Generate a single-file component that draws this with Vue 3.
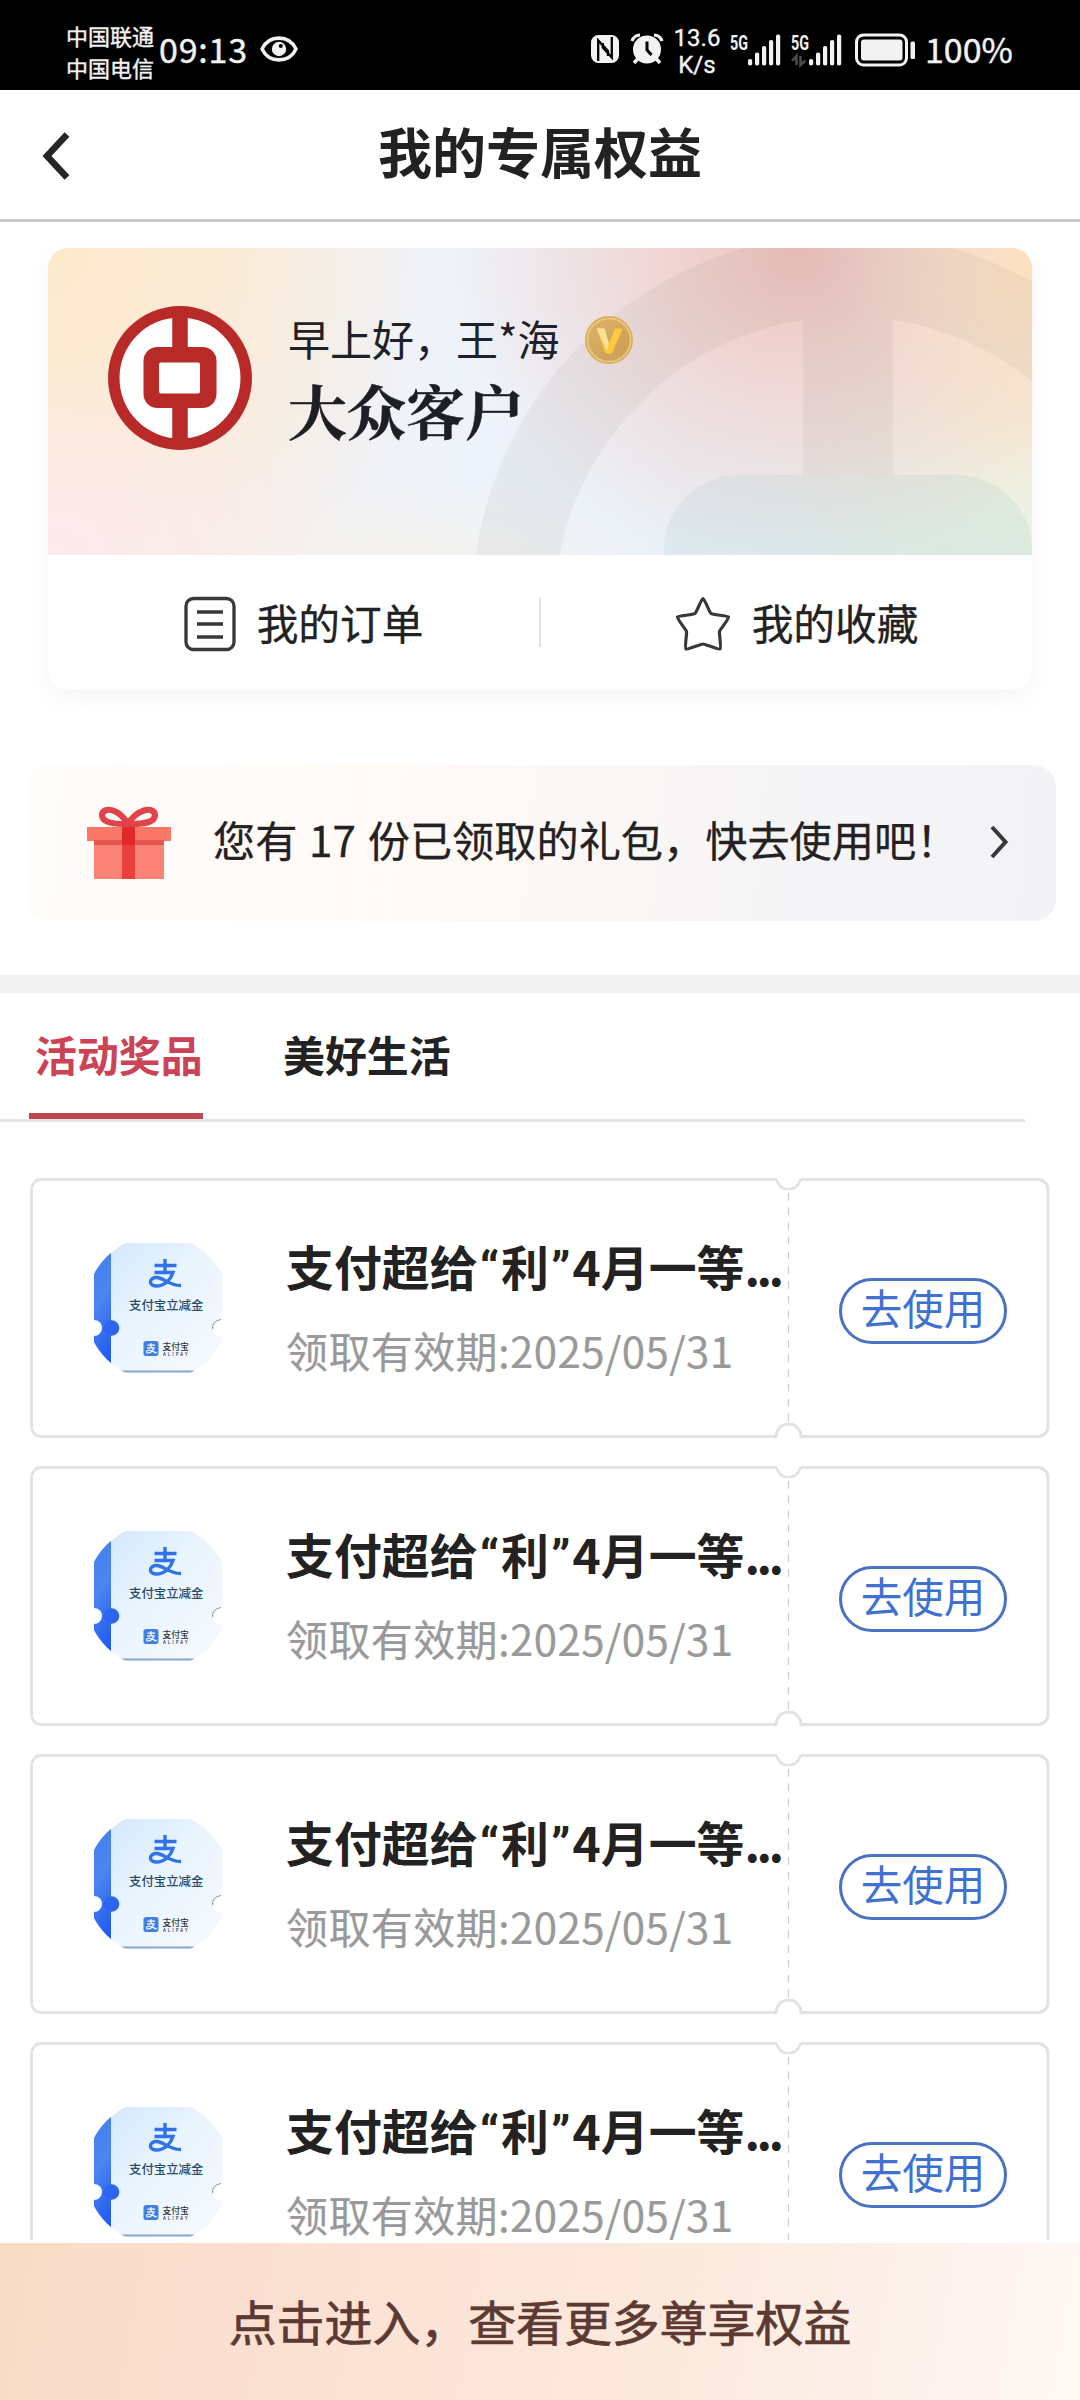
<script setup>
const coupons = [1, 2, 3, 4].map((id) => ({
  id,
  date: '领取有效期:2025/05/31',
}))
const sims = [{ id: 1, data: false }, { id: 2, data: true }]
const bars = [0, 1, 2, 3, 4]
const barTops = [59, 52.5, 46, 40, 34.5]
</script>

<template>
  <div class="screen">
    <div class="status">
      <div class="carriers"><span>中国联通</span><span>中国电信</span></div>
      <span class="time">09:13</span>
      <svg class="eye" width="40" height="28" viewBox="0 0 40 28">
        <path d="M3 14 C10 -0.500 30 -0.500 37 14 C30 28.500 10 28.500 3 14Z" fill="none" stroke="#f2f2f2" stroke-width="3.600" stroke-linejoin="round" />
        <circle cx="20" cy="14" r="7.200" fill="#f2f2f2" />
        <circle cx="21.800" cy="11" r="2" fill="#000" />
      </svg>
      <div class="spacer"></div>
      <svg class="nfc" width="30" height="30" viewBox="0 0 30 30">
        <rect x="1" y="1" width="28" height="28" rx="7.500" fill="#f2f2f2" />
        <path d="M8.200 27 V6.500 L18 17 V22" fill="none" stroke="#000" stroke-width="2.300" />
        <path d="M21.800 3 V23.500 L12.800 13.500 V9" fill="none" stroke="#000" stroke-width="2.300" />
      </svg>
      <svg class="alarm" width="34" height="32" viewBox="0 0 34 32">
        <path d="M8 25.500 L4 30 M26 25.500 L30 30" stroke="#f2f2f2" stroke-width="3.500" />
        <circle cx="17" cy="16.500" r="14" fill="#f2f2f2" />
        <path d="M2 8 A9 9 0 0 1 10 2 M32 8 A9 9 0 0 0 24 2" fill="none" stroke="#f2f2f2" stroke-width="3.200" />
        <path d="M17 8.500 V17 L21.500 22" fill="none" stroke="#000" stroke-width="3" />
      </svg>
      <div class="speed"><span>13.6</span><span>K/s</span></div>
      <svg v-for="s in sims" :key="s.id" class="signal" width="52" height="36" viewBox="0 32 52 36">
        <text class="g" x="0" y="49.500" textLength="18" lengthAdjust="spacingAndGlyphs">5G</text>
        <rect v-for="b in bars" :key="b" :x="18 + b * 7" :y="barTops[b]" width="4.200" :height="65.500 - barTops[b]" rx="1.800" fill="#f2f2f2" />
        <path v-if="s.data" d="M5.500 65 V56 L1 61 M9.500 56 V65 L14.500 60.500" fill="none" stroke="#4c4c4c" stroke-width="2.600" />
      </svg>
      <svg class="battery" width="61" height="34" viewBox="0 0 61 34">
        <rect x="1.500" y="2" width="50" height="30" rx="7" fill="none" stroke="#f2f2f2" stroke-width="3" />
        <rect x="6" y="6.500" width="41.500" height="21" rx="3" fill="#f2f2f2" />
        <rect x="55.500" y="8.500" width="4.500" height="17.500" rx="1.500" fill="#f2f2f2" />
      </svg>
      <span class="percent">100%</span>
    </div>

    <header class="nav">
      <svg class="back" width="32" height="52" viewBox="0 0 32 52">
        <path d="M26 4.500 L6 26 L26 47.500" fill="none" stroke="#262626" stroke-width="6.600" />
      </svg>
      <h1>我的专属权益</h1>
    </header>

    <section class="member">
      <div class="banner">
        <svg class="mark" width="984" height="307" viewBox="0 0 984 307">
          <g opacity="0.060" fill="none" stroke="#5c5548">
            <path d="M800 50 V227" stroke-width="90" />
            <circle cx="800" cy="362" r="335" stroke-width="83" />
          </g>
          <rect x="616" y="227" width="368" height="300" rx="75" fill="#4f9a9c" fill-opacity="0.080" />
        </svg>
        <svg class="logo" width="144" height="144" viewBox="0 0 144 144">
          <circle cx="72" cy="72" r="72" fill="#b82a28" />
          <circle cx="72" cy="72" r="60.500" fill="#fff" />
          <path d="M72 8 V136" stroke="#b82a28" stroke-width="15.500" />
          <rect x="35.500" y="41" width="73" height="61" rx="14" fill="#b82a28" />
          <rect x="51" y="56.500" width="41" height="31" rx="2" fill="#fff" />
        </svg>
        <div class="who">
          <div class="greet">
            <span>早上好，王*海</span>
            <svg width="50" height="50" viewBox="0 0 50 50">
              <defs>
                <linearGradient id="gold" x1="0" y1="0" x2="1" y2="1">
                  <stop offset="0" stop-color="#dcb46a" /><stop offset="1" stop-color="#cb9a52" />
                </linearGradient>
              </defs>
              <circle cx="25" cy="25" r="24" fill="#d6ae60" />
              <circle cx="25" cy="25" r="21.500" fill="url(#gold)" stroke="#ecca80" stroke-width="1.500" />
              <path d="M12.500 13.500 H20.500 L25 29 L31 13.500 H38.500 L28 38.500 H21.500 Z" fill="#fbcb3e" />
              <path d="M12.500 13.500 H20.500 L25 29 L23 35 Z" fill="#fde09a" />
            </svg>
          </div>
          <div class="level">大众客户</div>
        </div>
      </div>
      <div class="actions">
        <div class="action">
          <svg width="52" height="56" viewBox="0 0 52 56">
            <rect x="2" y="2.500" width="48" height="51" rx="7.500" fill="none" stroke="#383838" stroke-width="3.300" />
            <path d="M13 16 H39 M13 28 H39 M13 41 H39" stroke="#383838" stroke-width="3.300" />
          </svg>
          <span>我的订单</span>
        </div>
        <i class="split"></i>
        <div class="action">
          <svg width="56" height="56" viewBox="0 0 56 56">
            <path d="M28 2.500 C29.500 2.500 34.500 16.500 36 17.500 C38 19 52.500 19.500 53.500 21 C54.500 22.500 45 33.500 44.500 35.500 C44 37.500 46.500 52 45 53 C43.500 54 30 48 28 48 C26 48 12.500 54 11 53 C9.500 52 12 37.500 11.500 35.500 C11 33.500 1.500 22.500 2.500 21 C3.500 19.500 18 19 20 17.500 C21.500 16.500 26.500 2.500 28 2.500Z" fill="none" stroke="#383838" stroke-width="3.200" stroke-linejoin="round" />
          </svg>
          <span>我的收藏</span>
        </div>
      </div>
    </section>

    <section class="gift">
      <svg width="86" height="74" viewBox="0 0 86 74">
        <rect x="8" y="33" width="70" height="40" fill="#fa8276" />
        <rect x="1" y="21" width="84" height="14" fill="#fb7768" />
        <rect x="8" y="34" width="70" height="5" fill="#e5574e" />
        <rect x="36" y="16" width="13" height="57" fill="#e9413c" />
        <rect x="36" y="20" width="13" height="19" fill="#e1292c" />
        <path d="M42 18 C36 8 27 2.500 20.500 4 C14 6 15 13 21 15.500 C28 18.500 35 18 42 18 C49 18 56 18.500 64 15.500 C70 13 71 6 64.500 4 C58 2.500 48 8 42 18Z" fill="none" stroke="#e2434a" stroke-width="6.200" stroke-linejoin="round" />
      </svg>
      <span class="gift-text">您有 17 份已领取的礼包，快去使用吧！</span>
      <svg class="more" width="20" height="36" viewBox="0 0 20 36">
        <path d="M3 3 L16.500 18 L3 33" fill="none" stroke="#3a3638" stroke-width="4" />
      </svg>
    </section>

    <div class="strip"></div>

    <nav class="tabs">
      <span class="tab active">活动奖品</span>
      <span class="tab">美好生活</span>
    </nav>

    <main class="list">
      <article v-for="c in coupons" :key="c.id" class="coupon">
        <svg class="frame" width="1020" height="260" viewBox="0 0 1020 260">
          <path d="M11.500 1.500 H743.500 Q747 1.500 747.500 4 A12 12 0 0 0 769.500 4 Q770 1.500 773.500 1.500 H1008 A10 10 0 0 1 1018 11.500 V248.500 A10 10 0 0 1 1008 258.500 H771 A12.500 12.500 0 1 0 746 258.500 H11.500 A10 10 0 0 1 1.500 248.500 V11.500 A10 10 0 0 1 11.500 1.500Z" fill="#fff" stroke="#e2e2e2" stroke-width="2.800" />
          <path d="M758.500 15 V245" stroke="#cacaca" stroke-width="1.200" stroke-dasharray="7.500 7.200" />
        </svg>
        <svg class="thumb" width="128" height="130" viewBox="95 1243 128 130">
          <defs>
            <clipPath :id="'c' + c.id"><circle cx="159" cy="1308" r="72.500" /></clipPath>
            <linearGradient :id="'p' + c.id" x1="0" y1="0" x2="1" y2="1">
              <stop offset="0" stop-color="#cfe6fd" /><stop offset="0.450" stop-color="#e9f4fe" /><stop offset="1" stop-color="#f7fbfe" />
            </linearGradient>
            <linearGradient :id="'b' + c.id" x1="0" y1="0" x2="0.200" y2="1">
              <stop offset="0" stop-color="#4080f0" /><stop offset="0.500" stop-color="#4c86ee" /><stop offset="1" stop-color="#1f5cf0" />
            </linearGradient>
          </defs>
          <g :clip-path="`url(#c${c.id})`">
            <rect x="95" y="1243" width="128" height="130" :fill="`url(#p${c.id})`" />
            <rect x="95" y="1370.500" width="128" height="2" fill="#86a8d0" />
            <rect x="95" y="1243" width="17" height="130" :fill="`url(#b${c.id})`" />
            <circle cx="112.500" cy="1328" r="7.800" fill="#2c66ee" />
            <circle cx="95" cy="1328" r="8" fill="#fff" />
            <circle cx="223" cy="1328" r="9.500" fill="#fff" />
            <path d="M222 1319.500 Q213 1321 213.500 1329" fill="none" stroke="#7b8fa8" stroke-width="1" />
          </g>
          <path d="M155.500 1265.500 H177.500 M166 1259 V1272.500 M155.500 1272.500 H174 C172 1279 166 1286 157 1286 C149 1286 150 1277 158 1277.500 C165 1278 171 1286 182 1285.500" fill="none" stroke="#2f72ea" stroke-width="3.400" />
          <text x="130" y="1309.700" font-size="12.400" font-weight="500" fill="#2b4a68">支付宝立减金</text>
          <rect x="144.500" y="1341" width="15" height="15" rx="2.500" fill="#3d80e6" />
          <path d="M148.500 1345.200 H156 M152 1343 V1347.500 M148 1347.800 H155 C154 1350.500 151.500 1353 149 1353 C146.500 1353 147.500 1350 150 1350 C152.500 1350.300 154.500 1352.500 158 1353" fill="none" stroke="#fff" stroke-width="1.200" />
          <text x="163.500" y="1349.700" font-size="8.800" font-weight="500" fill="#2a323c">支付宝</text>
          <text x="164" y="1355.600" font-size="4.400" font-weight="500" fill="#2a323c" textLength="24.500">ALIPAY</text>
        </svg>
        <div class="info">
          <div class="title">支付超给<span class="q">“</span>利<span class="q">”</span>4月一等<span class="dots">...</span></div>
          <div class="date">{{ c.date }}</div>
        </div>
        <button class="use">去使用</button>
      </article>
    </main>

    <footer class="enter">点击进入，查看更多尊享权益</footer>
  </div>
</template>

<style>
body { margin: 0; background: #fff; }
</style>

<style scoped>
.screen {
  width: 1080px;
  height: 2400px;
  overflow: hidden;
  display: flex;
  flex-direction: column;
  background: #fff;
  color: #222;
  font-family: "Noto Sans CJK SC", "Noto Sans", sans-serif;
}
.screen > * { flex: none; box-sizing: border-box; }
svg { display: block; flex: none; }
.status {
  height: 90px;
  background: #000;
  color: #f2f2f2;
  display: flex;
  align-items: center;
  padding: 12px 66px 0 66px;
  -webkit-text-stroke: 0.400px currentColor;
}
.carriers { display: flex; flex-direction: column; font-size: 22px; line-height: 32px; width: 93px; margin-top: -1px; }
.time { font-size: 34px; line-height: 40px; letter-spacing: 0.800px; width: 100px; margin-top: -5px; }
.eye { margin-top: -5px; }
.spacer { flex: 1; }
.nfc { margin: -5px 10px 0 0; }
.alarm { margin: -5px 8px 0 0; }
.speed { width: 50px; display: flex; flex-direction: column; align-items: center; font-family: "Roboto", sans-serif; font-size: 24px; line-height: 27px; margin: 1px 8px 0 0; }
.signal { margin: -2px 9px 0 0; }
.g { font-family: "Roboto", sans-serif; font-size: 21px; font-weight: 700; fill: #f2f2f2; stroke: none; }
.battery { margin: -2px 9px 0 3px; }
.percent { font-size: 34px; line-height: 40px; margin-top: -5px; width: 89px; white-space: nowrap; }
.nav {
  height: 132px;
  border-bottom: 3px solid #cbcbcb;
  display: flex;
  align-items: center;
  padding: 0 38px 0 41px;
}
.back { margin-top: 2px; }
.nav h1 { flex: 1; margin: -7px 35px 0 0; text-align: center; font-size: 54px; line-height: 70px; font-weight: 700; }
.member {
  width: 984px;
  height: 442px;
  margin: 26px 48px 0;
  border-radius: 20px;
  background: #fff;
  box-shadow: 0 8px 26px rgba(0, 0, 0, 0.045);
}
.banner {
  position: relative;
  height: 307px;
  border-radius: 20px 20px 0 0;
  overflow: hidden;
  box-sizing: border-box;
  padding: 58px 60px 0;
  display: flex;
  align-items: flex-start;
  background:
    radial-gradient(ellipse 210px 260px at 102% 0%, rgba(255, 224, 184, 1), rgba(252, 224, 196, 0.600) 50%, rgba(252, 228, 205, 0) 100%),
    radial-gradient(ellipse 350px 320px at 76% 0%, rgba(240, 194, 188, 1), rgba(242, 208, 204, 0.650) 50%, rgba(242, 215, 215, 0) 100%),
    radial-gradient(ellipse 280px 200px at 100% 56%, rgba(241, 240, 220, 1), rgba(240, 240, 220, 0) 100%),
    radial-gradient(ellipse 260px 140px at 96% 100%, rgba(228, 241, 234, 1), rgba(226, 242, 238, 0) 100%),
    radial-gradient(ellipse 300px 190px at 0% 100%, rgba(254, 233, 237, 1), rgba(250, 236, 242, 0) 100%),
    radial-gradient(ellipse 380px 420px at 0% 0%, rgba(253, 233, 203, 1), rgba(252, 234, 210, 0.850) 45%, rgba(248, 240, 230, 0) 100%),
    radial-gradient(ellipse 260px 90px at 36% 106%, rgba(246, 243, 236, 1), rgba(246, 243, 236, 0) 100%),
    linear-gradient(90deg, #f3f0ef 20%, #eef3fb 42%, #e9f0f7 65%, #e6f3f8 100%);
}
.mark { position: absolute; left: 0; top: 0; }
.logo { position: relative; }
.who { position: relative; margin-left: 36px; }
.greet { display: flex; align-items: center; gap: 24px; font-size: 42px; line-height: 62px; height: 62px; color: #1d2129; padding-top: 3px; }
.greet span { margin-top: -4px; }
.level { font-family: "Noto Serif CJK SC", "Noto Serif SC", "Source Han Serif SC", "Noto Sans CJK SC", serif; font-size: 59px; line-height: 80px; font-weight: 700; color: #1d1f25; margin-top: -1px; white-space: nowrap; -webkit-text-stroke: 0.500px currentColor; }
.actions { height: 135px; display: flex; align-items: center; }
.action { flex: 1; display: flex; align-items: center; justify-content: center; gap: 21px; font-size: 41.700px; line-height: 60px; padding: 2px 0 0 20px; -webkit-text-stroke: 0.300px currentColor; }
.action span { margin-top: -4px; }
.split { width: 2px; height: 49px; background: #e3e3e3; }
.gift {
  width: 1030px;
  height: 156px;
  margin: 75px 24px 0 26px;
  border-radius: 22px;
  background: linear-gradient(95deg, #fffcf9 0%, #fffaf6 35%, #fbf7f6 55%, #f5f4f6 75%, #f3f2f6 100%);
  display: flex;
  align-items: center;
  padding: 0 47px 0 60px;
}
.gift-text { flex: 1; margin: -9px 0 0 41px; font-size: 42.200px; line-height: 60px; word-spacing: 2.300px; white-space: nowrap; color: #242122; -webkit-text-stroke: 0.300px currentColor; }
.gift .more { margin-top: -3px; }
.strip { height: 18px; margin-top: 54px; background: #f3f3f3; }
.tabs { width: 1025px; height: 129px; border-bottom: 3px solid #e6e6e6; padding-left: 29px; display: flex; gap: 74px; }
.tab { box-sizing: border-box; width: 174px; height: 126px; padding: 30px 0 0 6px; font-size: 41.900px; line-height: 62px; font-weight: 700; white-space: nowrap; }
.tab.active { color: #cb4354; border-bottom: 6px solid #c24651; }
.list { height: 1118px; overflow: hidden; padding: 56px 30px 0; display: flex; flex-direction: column; gap: 28px; }
.coupon { position: relative; flex: none; height: 260px; display: flex; align-items: center; padding: 0 43px 0 64px; }
.frame { position: absolute; left: 0; top: 0; }
.thumb { position: relative; }
.thumb text { font-family: "Noto Sans CJK SC", sans-serif; }
.info { position: relative; flex: 1; margin-left: 64px; white-space: nowrap; }
.title { font-size: 47.900px; line-height: 72px; font-weight: 700; margin-top: -6px; }
.q { display: inline-block; width: 23.500px; font-family: "Roboto", sans-serif; line-height: 1; text-align: center; }
.dots { letter-spacing: -3.500px; }
.date { font-size: 42px; line-height: 62px; color: #999; margin-top: 18px; letter-spacing: 0.400px; -webkit-text-stroke: 0.200px currentColor; }
.use {
  position: relative;
  box-sizing: border-box;
  width: 168px;
  height: 66px;
  margin: 6px 0 0;
  padding: 0 0 8px;
  border: 3px solid #4a71c4;
  border-radius: 33px;
  background: #fff;
  color: #3f70d2;
  font-family: inherit;
  font-size: 41.500px;
  line-height: 54px;
  display: flex;
  align-items: center;
  justify-content: center;
}
.enter {
  height: 157px;
  margin-top: 3px;
  padding-bottom: 4px;
  display: flex;
  align-items: center;
  justify-content: center;
  font-size: 47.900px;
  color: #5c3a33;
  -webkit-text-stroke: 0.700px currentColor;
  background: linear-gradient(100deg, #f9dcc6 0%, #fbdfd0 20%, #fce5d8 45%, #fceade 65%, #fdf2ec 85%, #fff8f5 100%);
}
</style>
